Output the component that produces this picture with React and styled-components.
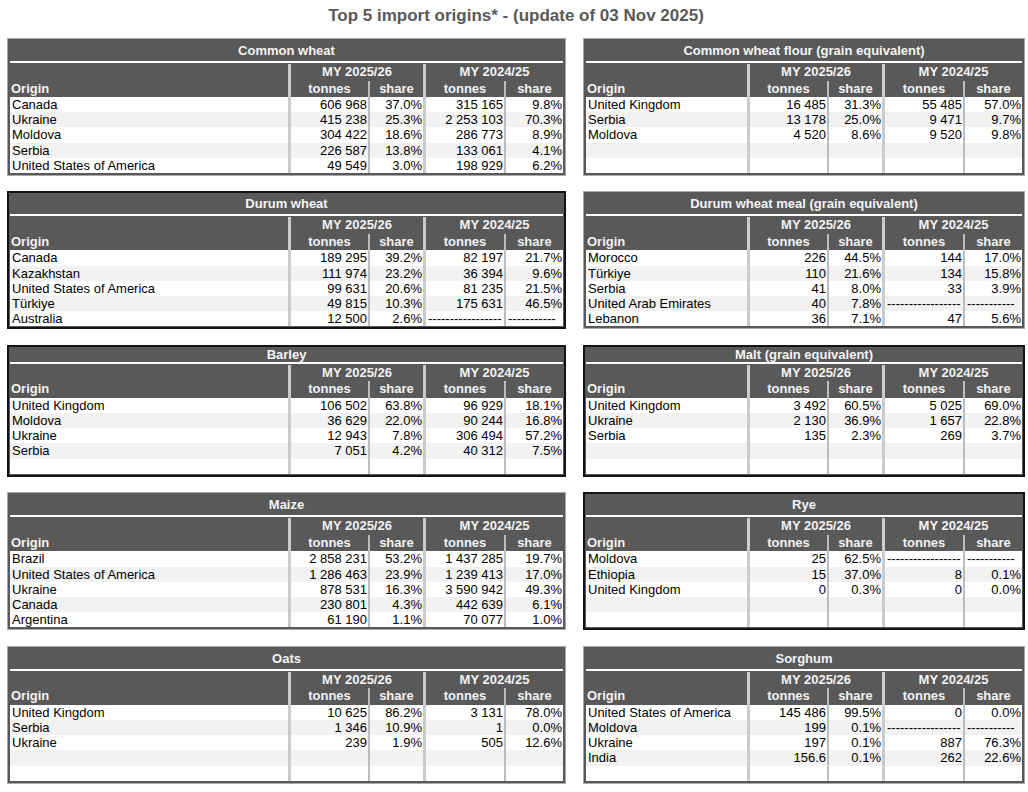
import React from 'react';
import styled, { createGlobalStyle } from 'styled-components';

const GlobalStyle = createGlobalStyle`
    body {
        margin: 0;
        background: #ffffff;
        font-family: "Liberation Sans", Arial, sans-serif;
    }
`;

const Page = styled.div`
    width: 1028px;
    padding: 0 3px 0 7px;
    box-sizing: border-box;
`;

const Heading = styled.h1`
    margin: 0;
    height: 38px;
    line-height: 32px;
    text-align: center;
    font-size: 17px;
    font-weight: bold;
    color: #595959;
`;

const Board = styled.div`
    display: grid;
    grid-template-columns: 559px 442px;
    column-gap: 17px;
    row-gap: 15.5px;
`;

const Panel = styled.section`
    background: #595959;
    box-sizing: border-box;
    border: ${p => (p.$dark ? '2px solid #141414' : '1px solid #a8a8a8')};
    padding: ${p => (p.$dark ? '0 1px 1px' : '1px 2px 2px')};
`;

const PanelTitle = styled.div`
    height: ${p => (p.$compact ? 15 : 21)}px;
    line-height: ${p => (p.$compact ? 15 : 21)}px;
    text-align: center;
    font-size: 13px;
    font-weight: bold;
    color: #f4f4f4;
    white-space: nowrap;
    overflow: hidden;
`;

const Rule = styled.div`
    height: 2px;
    background: #ffffff;
    margin-bottom: 1px;
`;

const Table = styled.div`
    display: grid;
    grid-template-columns: 1fr 80px 55px 81px 59px;
    grid-template-rows: 16.5px 16.5px repeat(5, 15.2px);
`;

const sepColor = { major: '#cbcbcb', minor: '#bdbdbd' };
const sepWidth = { major: 3, minor: 2 };

const Cell = styled.div`
    box-sizing: border-box;
    font-size: 13px;
    white-space: nowrap;
    overflow: hidden;
    border-left: ${p => (p.$sep ? `${sepWidth[p.$sep]}px solid ${sepColor[p.$sep]}` : 'none')};
`;

const HeadCell = styled(Cell)`
    grid-column: ${p => (p.$span ? `span ${p.$span}` : 'auto')};
    line-height: 16.5px;
    font-weight: bold;
    color: #f2f2f2;
    text-align: ${p => p.$align || 'center'};
    padding-left: ${p => (p.$align === 'left' ? '1px' : '0')};
`;

const DataCell = styled(Cell)`
    line-height: 15.2px;
    color: #000000;
    background: ${p => (p.$alt ? '#f2f2f2' : '#ffffff')};
    text-align: ${p => p.$align || 'right'};
    padding: 0 1px 0 2px;
`;

const DASH_T = '-----------------';
const DASH_S = '-----------';

const panels = [
    {
        title: 'Common wheat',
        rows: [
            ['Canada', '606 968', '37.0%', '315 165', '9.8%'],
            ['Ukraine', '415 238', '25.3%', '2 253 103', '70.3%'],
            ['Moldova', '304 422', '18.6%', '286 773', '8.9%'],
            ['Serbia', '226 587', '13.8%', '133 061', '4.1%'],
            ['United States of America', '49 549', '3.0%', '198 929', '6.2%'],
        ],
    },
    {
        title: 'Common wheat flour (grain equivalent)',
        rows: [
            ['United Kingdom', '16 485', '31.3%', '55 485', '57.0%'],
            ['Serbia', '13 178', '25.0%', '9 471', '9.7%'],
            ['Moldova', '4 520', '8.6%', '9 520', '9.8%'],
        ],
    },
    {
        title: 'Durum wheat',
        dark: true,
        rows: [
            ['Canada', '189 295', '39.2%', '82 197', '21.7%'],
            ['Kazakhstan', '111 974', '23.2%', '36 394', '9.6%'],
            ['United States of America', '99 631', '20.6%', '81 235', '21.5%'],
            ['Türkiye', '49 815', '10.3%', '175 631', '46.5%'],
            ['Australia', '12 500', '2.6%', null, null],
        ],
    },
    {
        title: 'Durum wheat meal (grain equivalent)',
        rows: [
            ['Morocco', '226', '44.5%', '144', '17.0%'],
            ['Türkiye', '110', '21.6%', '134', '15.8%'],
            ['Serbia', '41', '8.0%', '33', '3.9%'],
            ['United Arab Emirates', '40', '7.8%', null, null],
            ['Lebanon', '36', '7.1%', '47', '5.6%'],
        ],
    },
    {
        title: 'Barley',
        dark: true,
        compact: true,
        rows: [
            ['United Kingdom', '106 502', '63.8%', '96 929', '18.1%'],
            ['Moldova', '36 629', '22.0%', '90 244', '16.8%'],
            ['Ukraine', '12 943', '7.8%', '306 494', '57.2%'],
            ['Serbia', '7 051', '4.2%', '40 312', '7.5%'],
        ],
    },
    {
        title: 'Malt (grain equivalent)',
        dark: true,
        compact: true,
        rows: [
            ['United Kingdom', '3 492', '60.5%', '5 025', '69.0%'],
            ['Ukraine', '2 130', '36.9%', '1 657', '22.8%'],
            ['Serbia', '135', '2.3%', '269', '3.7%'],
        ],
    },
    {
        title: 'Maize',
        rows: [
            ['Brazil', '2 858 231', '53.2%', '1 437 285', '19.7%'],
            ['United States of America', '1 286 463', '23.9%', '1 239 413', '17.0%'],
            ['Ukraine', '878 531', '16.3%', '3 590 942', '49.3%'],
            ['Canada', '230 801', '4.3%', '442 639', '6.1%'],
            ['Argentina', '61 190', '1.1%', '70 077', '1.0%'],
        ],
    },
    {
        title: 'Rye',
        dark: true,
        rows: [
            ['Moldova', '25', '62.5%', null, null],
            ['Ethiopia', '15', '37.0%', '8', '0.1%'],
            ['United Kingdom', '0', '0.3%', '0', '0.0%'],
        ],
    },
    {
        title: 'Oats',
        rows: [
            ['United Kingdom', '10 625', '86.2%', '3 131', '78.0%'],
            ['Serbia', '1 346', '10.9%', '1', '0.0%'],
            ['Ukraine', '239', '1.9%', '505', '12.6%'],
        ],
    },
    {
        title: 'Sorghum',
        rows: [
            ['United States of America', '145 486', '99.5%', '0', '0.0%'],
            ['Moldova', '199', '0.1%', null, null],
            ['Ukraine', '197', '0.1%', '887', '76.3%'],
            ['India', '156.6', '0.1%', '262', '22.6%'],
        ],
    },
];

const SEPS = [null, 'major', 'minor', 'major', 'minor'];
const DASHES = [null, DASH_T, DASH_S, DASH_T, DASH_S];

const OriginPanel = ({ title, rows, dark, compact }) => {
    const filled = [...rows];
    while (filled.length < 5) filled.push(['', '', '', '', '']);

    return (
        <Panel $dark={dark}>
            <PanelTitle $compact={compact}>{title}</PanelTitle>
            <Rule />
            <Table>
                <HeadCell />
                <HeadCell $span={2} $sep="major">MY 2025/26</HeadCell>
                <HeadCell $span={2} $sep="major">MY 2024/25</HeadCell>
                <HeadCell $align="left">Origin</HeadCell>
                <HeadCell $sep="major">tonnes</HeadCell>
                <HeadCell $sep="minor">share</HeadCell>
                <HeadCell $sep="major">tonnes</HeadCell>
                <HeadCell $sep="minor">share</HeadCell>
                {filled.map((row, i) =>
                    row.map((value, j) => {
                        const dash = value === null;
                        return (
                            <DataCell
                                key={`${i}-${j}`}
                                $alt={i % 2 === 1}
                                $sep={SEPS[j]}
                                $align={j === 0 || dash ? 'left' : 'right'}
                            >
                                {dash ? DASHES[j] : value}
                            </DataCell>
                        );
                    })
                )}
            </Table>
        </Panel>
    );
};

const App = () => {
    return (
        <Page>
            <GlobalStyle />
            <Heading>Top 5 import origins* - (update of 03 Nov 2025)</Heading>
            <Board>
                {panels.map(p => (
                    <OriginPanel key={p.title} {...p} />
                ))}
            </Board>
        </Page>
    );
};

export default App;
